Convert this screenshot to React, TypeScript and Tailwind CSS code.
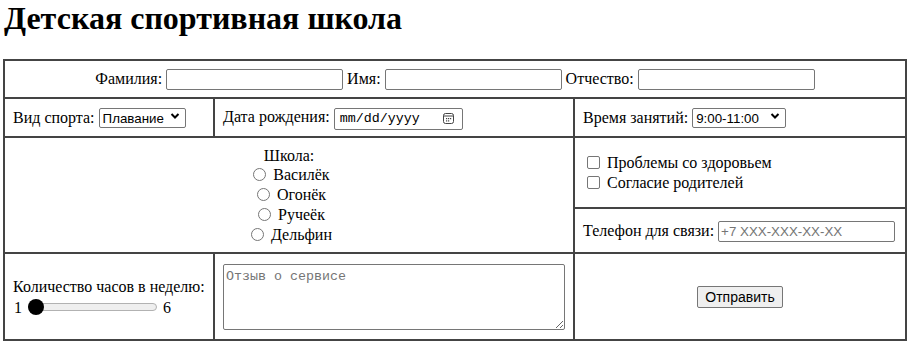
import React from "react";

const inp =
  "h-[21px] w-[177px] border border-[#767676] rounded-[2px] px-[2px] bg-white font-['Liberation_Sans',sans-serif] text-[13.33px] text-black placeholder:text-[#757575] outline-none";

function Chevron() {
  return (
    <svg width="10" height="8" viewBox="0 0 10 8" className="pointer-events-none absolute right-[6px] top-[6px]">
      <path d="M1.5 2 L5 5.5 L8.5 2" fill="none" stroke="#000" strokeWidth="2" />
    </svg>
  );
}

function Select({ value, w }: { value: string; w: string }) {
  return (
    <span className="relative inline-block align-baseline">
      <select
        className={
          "appearance-none h-[20px] border border-[#767676] rounded-[2px] bg-white pl-[3px] pr-[20px] font-['Liberation_Sans',sans-serif] text-[13.33px] text-black outline-none " +
          w
        }
        defaultValue={value}
      >
        <option>{value}</option>
      </select>
      <Chevron />
    </span>
  );
}

function Radio({ label }: { label: string }) {
  return (
    <label className="block leading-[20px]">
      <input
        type="radio"
        name="school"
        className="appearance-none inline-block w-[13px] h-[13px] rounded-full border border-[#767676] bg-white align-[-1px] mt-[3px] mr-[3px] ml-[5px]"
      />{" "}
      {label}
    </label>
  );
}

function Check({ label }: { label: string }) {
  return (
    <label className="block leading-[20px]">
      <input
        type="checkbox"
        className="appearance-none inline-block w-[13px] h-[13px] rounded-[2px] border border-[#767676] bg-white align-[-1px] mt-[3px] mr-[3px] ml-[4px]"
      />{" "}
      {label}
    </label>
  );
}

export default function App() {
  return (
    <div className="px-[3px] bg-white text-black font-['Liberation_Serif',serif] text-[16px]">
      <h1 className="m-0 mb-[22px] pl-[1px] text-[32px] font-bold leading-[37px]">Детская спортивная школа</h1>
      <table className="w-[902px] table-fixed border-collapse border-2 border-[#444]">
        <colgroup>
          <col className="w-[210px]" />
          <col className="w-[360px]" />
          <col className="w-[332px]" />
        </colgroup>
        <tbody>
          <tr className="h-[38px]">
            <td colSpan={3} className="border-2 border-[#444] px-[8px] text-center align-middle">
              Фамилия: <input className={inp} /> Имя: <input className={inp} /> Отчество: <input className={inp} />
            </td>
          </tr>
          <tr className="h-[39px]">
            <td className="border-2 border-[#444] px-[8px] align-middle">
              Вид спорта: <Select value="Плавание" w="w-[87px]" />
            </td>
            <td className="border-2 border-[#444] px-[8px] align-middle">
              Дата рождения:{" "}
              <span className="inline-flex items-center h-[22px] w-[129px] border border-[#767676] rounded-[2px] pl-[5px] pr-[8px] align-middle font-['Liberation_Mono',monospace] text-[13.33px] leading-none">
                <span className="flex-1">mm/dd/yyyy</span>
                <svg width="11" height="11" viewBox="0 0 11 11">
                  <rect x="0.5" y="0.5" width="10" height="10" rx="2" fill="none" stroke="#444" />
                  <line x1="0.5" y1="3" x2="10.5" y2="3" stroke="#444" />
                  <rect x="3" y="5" width="1.2" height="1.2" fill="#444" />
                  <rect x="5" y="5" width="1.2" height="1.2" fill="#444" />
                  <rect x="7" y="5" width="1.2" height="1.2" fill="#444" />
                  <rect x="3" y="7.3" width="1.2" height="1.2" fill="#444" />
                  <rect x="5" y="7.3" width="1.2" height="1.2" fill="#444" />
                </svg>
              </span>
            </td>
            <td className="border-2 border-[#444] px-[8px] align-middle">
              Время занятий: <Select value="9:00-11:00" w="w-[94px]" />
            </td>
          </tr>
          <tr className="h-[71px]">
            <td colSpan={2} rowSpan={2} className="border-2 border-[#444] px-[8px] text-center align-middle">
              <div className="leading-[18px] mt-[1px]">Школа:</div>
              <Radio label="Василёк" />
              <Radio label="Огонёк" />
              <Radio label="Ручеёк" />
              <Radio label="Дельфин" />
            </td>
            <td className="border-2 border-[#444] px-[8px] align-middle">
              <Check label="Проблемы со здоровьем" />
              <Check label="Согласие родителей" />
            </td>
          </tr>
          <tr className="h-[45px]">
            <td className="border-2 border-[#444] px-[8px] align-middle">
              Телефон для связи: <input className={inp + " w-[176px]"} placeholder="+7 XXX-XXX-XX-XX" />
            </td>
          </tr>
          <tr className="h-[87px]">
            <td className="border-2 border-[#444] px-[8px] align-middle">
              <div className="leading-[19px]">Количество часов в неделю:</div>
              <div className="flex items-center leading-[19px] mt-[2px]">
                <span className="ml-[1px]">1</span>
                <span className="relative mx-[6px] w-[129px] h-[16px] flex items-center">
                  <span className="block w-full h-[8px] rounded-full bg-[#efefef] border border-[#b2b2b2]" />
                  <span className="absolute left-0 top-0 w-[16px] h-[16px] rounded-full bg-black" />
                </span>
                <span>6</span>
              </div>
            </td>
            <td className="border-2 border-[#444] px-[8px] align-middle">
              <textarea
                className="block w-[342px] h-[66px] border border-[#767676] rounded-[2px] px-[2px] py-[2px] font-['Liberation_Mono',monospace] text-[13.33px] placeholder:text-[#757575] outline-none"
                placeholder="Отзыв о сервисе"
              />
            </td>
            <td className="border-2 border-[#444] px-[8px] text-center align-middle">
              <button className="h-[22px] px-[7px] border border-[#767676] rounded-[2px] bg-[#efefef] font-['Liberation_Sans',sans-serif] text-[14px] text-black">
                Отправить
              </button>
            </td>
          </tr>
        </tbody>
      </table>
    </div>
  );
}
